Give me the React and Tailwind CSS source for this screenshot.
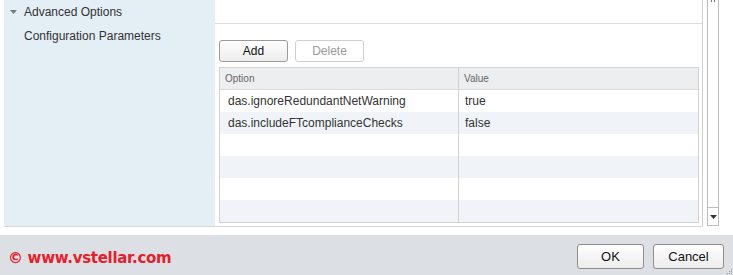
import React from "react";

const rows = [
  ["das.ignoreRedundantNetWarning", "true"],
  ["das.includeFTcomplianceChecks", "false"],
  ["", ""],
  ["", ""],
  ["", ""],
  ["", ""],
];

export default function App() {
  return (
    <div className="w-[733px] h-[275px] bg-white flex flex-col overflow-hidden text-[#333] [font-family:'Liberation_Sans',Arial,sans-serif]">
      {/* main area */}
      <div className="flex h-[227px] pl-[4px]">
        <div className="flex w-[699px] border-b border-[#d6d9dc]">
          {/* left labels */}
          <div className="w-[211px] bg-[#e3eef5] flex flex-col">
            <div className="h-[23px] flex items-center pl-[6px]">
              <svg width="7" height="4" viewBox="0 0 7 4" className="mr-[7px]">
                <path d="M0 0H7L3.5 4Z" fill="#7a7a7a" />
              </svg>
              <span className="text-[12px] leading-none">Advanced Options</span>
            </div>
            <div className="pl-[20px] pt-[7px] text-[12px] leading-none">Configuration Parameters</div>
          </div>
          {/* right content */}
          <div className="flex-1 flex flex-col border-r border-[#cfcfcf]">
            <div className="h-[24px] border-b border-[#dcdcdc]" />
            <div className="flex gap-[7px] pl-[4px] pt-[16px]">
              <button className="w-[69px] h-[22px] rounded-[3px] border border-[#9a9a9a] bg-gradient-to-b from-white to-[#ececec] text-[12px] text-[#111] leading-none">
                Add
              </button>
              <button className="w-[69px] h-[22px] rounded-[3px] border border-[#cfcfcf] bg-white text-[12px] text-[#9a9a9a] leading-none">
                Delete
              </button>
            </div>
            <div className="ml-[4px] mt-[5px] w-[480px] border border-[#d2d2d2]">
              <div className="flex h-[22px] bg-[#eceef0] border-b border-[#dadada] text-[10px] text-[#666]">
                <div className="w-[239px] border-r border-[#d2d2d2] flex items-center pl-[5px]">Option</div>
                <div className="flex-1 flex items-center pl-[5px]">Value</div>
              </div>
              {rows.map((r, i) => (
                <div key={i} className={`flex h-[22px] text-[12px] ${i % 2 === 1 ? "bg-[#f0f4f8]" : "bg-white"}`}>
                  <div className="w-[239px] border-r border-[#d2d2d2] flex items-center pl-[8px]">{r[0]}</div>
                  <div className="flex-1 flex items-center pl-[6px]">{r[1]}</div>
                </div>
              ))}
            </div>
          </div>
        </div>
        {/* scrollbar */}
        <div className="ml-[4px] w-[12px] h-[226px] border-x border-b border-[#bdbdbd] flex flex-col justify-between">
          <div className="flex justify-center gap-[2px] pt-[0px]">
            <div className="w-[1px] h-[2px] bg-[#777]" />
            <div className="w-[1px] h-[2px] bg-[#777]" />
          </div>
          <div className="h-[18px] border-t border-[#bdbdbd] flex items-center justify-center">
            <svg width="7" height="4" viewBox="0 0 7 4">
              <path d="M0 0H7L3.5 4Z" fill="#333" />
            </svg>
          </div>
        </div>
      </div>
      {/* gap */}
      <div className="h-[8px]" />
      {/* footer */}
      <div className="flex-1 bg-[#dcdfe3] flex items-center justify-between pl-[8px] pr-[9px] relative">
        <div className="text-[#e4202b] font-bold text-[15px] leading-none mt-[7px] [font-family:'DejaVu_Sans',Verdana,sans-serif] tracking-[-0.3px]">
          © www.vstellar.com
        </div>
        <div className="flex gap-[9px] mt-[2px]">
          <button className="w-[67px] h-[25px] rounded-[3px] border border-[#8f8f8f] bg-gradient-to-b from-white to-[#ececec] text-[13px] text-[#111] leading-none">
            OK
          </button>
          <button className="w-[71px] h-[25px] rounded-[3px] border border-[#8f8f8f] bg-gradient-to-b from-white to-[#ececec] text-[13px] text-[#111] leading-none">
            Cancel
          </button>
        </div>
        <svg width="5" height="5" viewBox="0 0 5 5" className="absolute right-[1px] bottom-[1px]">
          <rect x="4" y="0" width="1" height="1" fill="#999" />
          <rect x="2" y="2" width="1" height="1" fill="#999" />
          <rect x="4" y="2" width="1" height="1" fill="#999" />
          <rect x="0" y="4" width="1" height="1" fill="#999" />
          <rect x="2" y="4" width="1" height="1" fill="#999" />
          <rect x="4" y="4" width="1" height="1" fill="#999" />
        </svg>
      </div>
    </div>
  );
}
